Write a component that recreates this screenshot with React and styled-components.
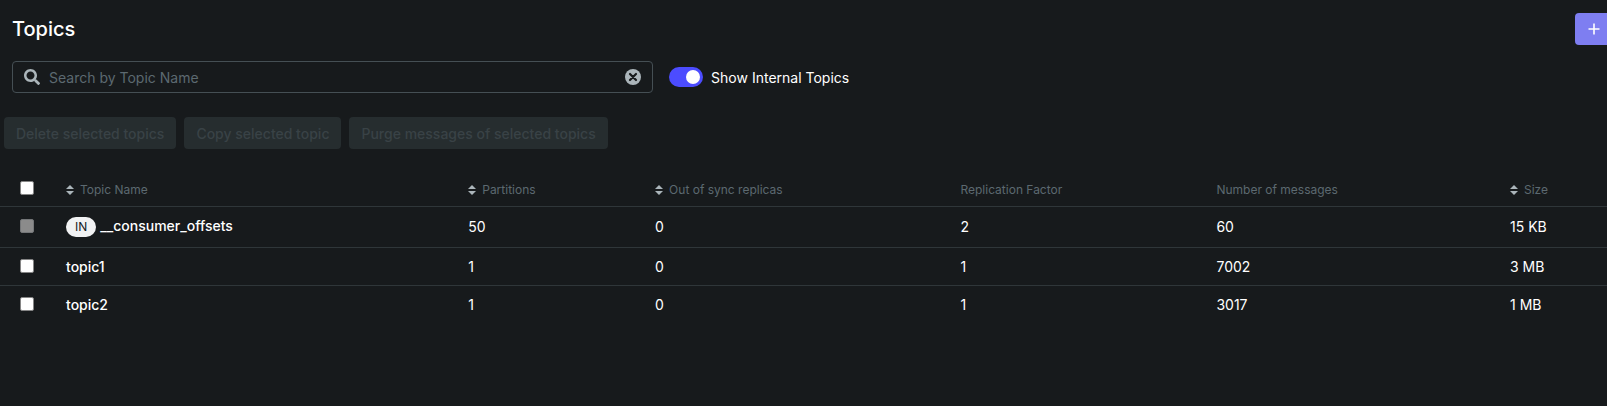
import React, { useState } from 'react';
import styled, { createGlobalStyle, css } from 'styled-components';

const GlobalStyle = createGlobalStyle`
  *, *::before, *::after { box-sizing: border-box; }
  body {
    margin: 0;
    background: #171a1c;
    color: #ffffff;
    font-family: Inter, "Liberation Sans", sans-serif;
    font-size: 14px;
    line-height: 20px;
  }
  input, button { font-family: inherit; }
`;

const Page = styled.main`
  min-height: 100vh;
  background: #171a1c;
  overflow-x: hidden;
`;

const Heading = styled.header`
  display: flex;
  align-items: center;
  justify-content: space-between;
  height: 57px;
  padding-left: 12px;
`;

const Title = styled.h1`
  margin: 0;
  font-size: 20px;
  font-weight: 500;
  line-height: 32px;
`;

const AddButton = styled.button`
  display: flex;
  align-items: center;
  width: 32px;
  height: 32px;
  padding: 0 0 0 13px;
  border: 0;
  border-radius: 4px 0 0 4px;
  background: #7e7ef1;
  color: #ffffff;
  cursor: pointer;
`;

const Controls = styled.div`
  display: flex;
  align-items: center;
  gap: 16px;
  padding: 4px 12px 24px;
`;

const SearchBox = styled.div`
  display: flex;
  align-items: center;
  width: 40.5%;
  height: 32px;
  padding: 0 11px;
  border: 1px solid #454f54;
  border-radius: 4px;
  color: #abb5ba;
`;

const SearchInput = styled.input`
  flex: 1;
  min-width: 0;
  height: 30px;
  padding: 0 8px 0 9px;
  border: 0;
  outline: 0;
  background: transparent;
  color: #ffffff;
  font-size: 14px;
  &::placeholder { color: #5c6970; opacity: 1; }
`;

const ClearButton = styled.button`
  display: flex;
  padding: 0;
  border: 0;
  background: transparent;
  color: inherit;
  cursor: pointer;
`;

const SwitchLabel = styled.label`
  display: flex;
  align-items: center;
  gap: 8px;
  cursor: pointer;
`;

const SwitchText = styled.span`
  padding-top: 2px;
`;

const SwitchInput = styled.input`
  appearance: none;
  display: flex;
  align-items: center;
  width: 34px;
  height: 20px;
  margin: 0;
  padding: 0 3px;
  border-radius: 10px;
  background: #454f54;
  cursor: pointer;
  &::before {
    content: "";
    width: 14px;
    height: 14px;
    border-radius: 50%;
    background: #ffffff;
  }
  &:checked {
    justify-content: flex-end;
    background: #4c4cff;
  }
`;

const BatchActions = styled.div`
  display: flex;
  gap: 8px;
  padding: 0 4px 16px;
`;

const BatchButton = styled.button`
  height: 32px;
  padding: 2px 12px 0;
  border: 0;
  border-radius: 4px;
  background: #262d2f;
  color: #394246;
  font-size: 14px;
  font-weight: 500;
  line-height: 20px;
`;

const Table = styled.table`
  width: 100%;
  border-collapse: collapse;
  table-layout: fixed;
`;

const Column = styled.col`
  width: ${({ $width }) => $width};
`;

const cell = css`
  text-align: left;
  white-space: nowrap;
  padding: 0 0 0 ${({ $select }) => ($select ? '20px' : '24px')};
`;

const HeadCell = styled.th`
  ${cell}
  height: 41px;
  border-bottom: 1px solid #2f3639;
  color: #5c6970;
  font-size: 12px;
  font-weight: 400;
  line-height: 16px;
`;

const Cell = styled.td`
  ${cell}
  line-height: 20px;
`;

const Row = styled.tr`
  height: ${({ $tagged }) => ($tagged ? '41px' : '38px')};
  & + & { border-top: 1px solid #2f3639; }
  & > ${Cell} + ${Cell} { padding-top: ${({ $tagged }) => ($tagged ? '0' : '2px')}; }
`;

const HeadLabel = styled.span`
  display: flex;
  align-items: center;
  gap: 6px;
  padding-top: 10px;
`;

const SortButton = styled.button`
  display: flex;
  align-items: center;
  gap: 6px;
  padding: 0;
  border: 0;
  background: transparent;
  color: inherit;
  font-size: 12px;
  line-height: 16px;
  cursor: pointer;
  svg { color: #abb5ba; }
`;

const Check = styled.input`
  appearance: none;
  display: block;
  width: 14px;
  height: 14px;
  margin: ${({ $head }) => ($head ? '6px' : '0')} 0 0;
  border: 1px solid #858585;
  border-radius: 2px;
  background: #ffffff;
  &:checked { background: #4c4cff; }
  &:disabled { margin-bottom: 2px; background: #8b8b8b; border-color: #747678; }
`;

const TopicLink = styled.a`
  display: flex;
  align-items: baseline;
  gap: 4px;
  color: #ffffff;
  font-weight: 500;
  text-decoration: none;
`;

const Tag = styled.span`
  padding: 0 9px;
  border-radius: 10px;
  background: #f1f2f3;
  color: #171a1c;
  font-size: 12px;
  font-weight: 400;
  line-height: 20px;
`;

const SearchIcon = () => (
  <svg width="16" height="16" viewBox="0 0 512 512" fill="currentColor" aria-hidden="true">
    <path d="M505 442.700 405.300 343c-4.500-4.500-10.600-7-17-7H372c27.600-35.300 44-79.700 44-128C416 93.100 322.900 0 208 0S0 93.100 0 208s93.100 208 208 208c48.300 0 92.700-16.400 128-44v16.300c0 6.400 2.500 12.500 7 17l99.700 99.700c9.400 9.400 24.600 9.400 33.900 0l28.300-28.300c9.400-9.400 9.400-24.600.1-34zM208 336c-70.700 0-128-57.200-128-128 0-70.700 57.200-128 128-128 70.700 0 128 57.200 128 128 0 70.700-57.200 128-128 128z" />
  </svg>
);

const ClearIcon = () => (
  <svg width="16" height="16" viewBox="0 0 16 16" aria-hidden="true">
    <circle cx="8" cy="8" r="8" fill="currentColor" />
    <path d="M5 5l6 6M11 5l-6 6" stroke="#171a1c" strokeWidth="2.200" strokeLinecap="round" />
  </svg>
);

const PlusIcon = () => (
  <svg width="12" height="12" viewBox="0 0 12 12" aria-hidden="true">
    <path d="M6 0.500v11M0.500 6h11" stroke="currentColor" strokeWidth="1.600" />
  </svg>
);

const SortIcon = () => (
  <svg width="8" height="10" viewBox="0 0 8 10" fill="currentColor" aria-hidden="true">
    <path d="M4 0l4 4H0zM4 10L0 6h8z" />
  </svg>
);

const columns = [
  { label: 'Topic Name', sortable: true, width: '25.03%' },
  { label: 'Partitions', sortable: true, width: '11.63%' },
  { label: 'Out of sync replicas', sortable: true, width: '19%' },
  { label: 'Replication Factor', width: '15.93%' },
  { label: 'Number of messages', width: '18.27%' },
  { label: 'Size', sortable: true, width: 'auto' },
];

const topics = [
  { name: '__consumer_offsets', internal: true, values: ['50', '0', '2', '60', '15 KB'] },
  { name: 'topic1', values: ['1', '0', '1', '7002', '3 MB'] },
  { name: 'topic2', values: ['1', '0', '1', '3017', '1 MB'] },
];

export default function App() {
  const [search, setSearch] = useState('');
  const [showInternal, setShowInternal] = useState(true);
  const visible = topics.filter(
    (t) => (showInternal || !t.internal) && t.name.includes(search)
  );

  return (
    <>
      <GlobalStyle />
      <Page>
        <Heading>
          <Title>Topics</Title>
          <AddButton type="button" aria-label="Add a topic"><PlusIcon /></AddButton>
        </Heading>
        <Controls>
          <SearchBox>
            <SearchIcon />
            <SearchInput
              type="text"
              aria-label="Search by Topic Name"
              placeholder="Search by Topic Name"
              value={search}
              onChange={(e) => setSearch(e.target.value)}
            />
            <ClearButton type="button" aria-label="Clear search" onClick={() => setSearch('')}>
              <ClearIcon />
            </ClearButton>
          </SearchBox>
          <SwitchLabel>
            <SwitchInput
              type="checkbox"
              role="switch"
              checked={showInternal}
              onChange={(e) => setShowInternal(e.target.checked)}
            />
            <SwitchText>Show Internal Topics</SwitchText>
          </SwitchLabel>
        </Controls>
        <BatchActions>
          <BatchButton type="button" disabled>Delete selected topics</BatchButton>
          <BatchButton type="button" disabled>Copy selected topic</BatchButton>
          <BatchButton type="button" disabled>Purge messages of selected topics</BatchButton>
        </BatchActions>
        <Table>
          <colgroup>
            <Column $width="42px" />
            {columns.map((c) => <Column key={c.label} $width={c.width} />)}
          </colgroup>
          <thead>
            <tr>
              <HeadCell $select>
                <Check $head type="checkbox" aria-label="Select all topics" />
              </HeadCell>
              {columns.map((c) => (
                <HeadCell key={c.label}>
                  <HeadLabel>
                    {c.sortable ? <SortButton type="button"><SortIcon />{c.label}</SortButton> : c.label}
                  </HeadLabel>
                </HeadCell>
              ))}
            </tr>
          </thead>
          <tbody>
            {visible.map((t) => (
              <Row key={t.name} $tagged={t.internal}>
                <Cell $select>
                  <Check type="checkbox" aria-label={`Select ${t.name}`} disabled={t.internal} />
                </Cell>
                <Cell>
                  <TopicLink href="#">
                    {t.internal && <Tag>IN</Tag>}
                    {t.name}
                  </TopicLink>
                </Cell>
                {t.values.map((v, i) => <Cell key={columns[i + 1].label}>{v}</Cell>)}
              </Row>
            ))}
          </tbody>
        </Table>
      </Page>
    </>
  );
}
